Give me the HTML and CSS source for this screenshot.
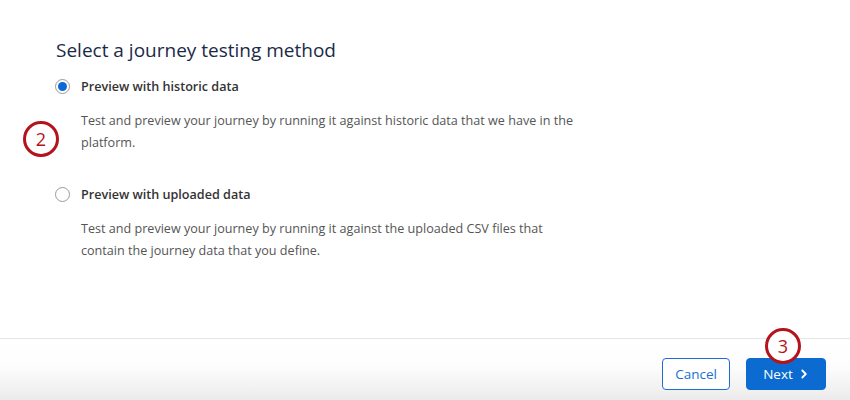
FILE: index.html
```html
<!DOCTYPE html>
<html>
<head>
<meta charset="utf-8">
<link rel="stylesheet" href="styles.css">
</head>
<body>
<div class="page">
  <main class="content">
    <h1 class="title">Select a journey testing method</h1>
    <div class="option">
      <label class="option-head">
        <span class="radio checked"></span>
        <span class="option-label">Preview with historic data</span>
      </label>
      <div class="option-body">
        <span class="callout callout-2">2</span>
        <p class="desc">Test and preview your journey by running it against historic data that we have in the platform.</p>
      </div>
    </div>
    <div class="option">
      <label class="option-head">
        <span class="radio"></span>
        <span class="option-label">Preview with uploaded data</span>
      </label>
      <div class="option-body">
        <p class="desc">Test and preview your journey by running it against the uploaded CSV files that contain the journey data that you define.</p>
      </div>
    </div>
  </main>
  <footer class="footer">
    <button class="btn btn-secondary">Cancel</button>
    <button class="btn btn-primary">Next
      <svg class="chev" width="10" height="10" viewBox="0 0 10 10"><path d="M3.3 1.5 L6.8 5 L3.3 8.5" fill="none" stroke="#fff" stroke-width="1.8" stroke-linecap="round" stroke-linejoin="round"/></svg>
      <span class="callout callout-3">3</span>
    </button>
  </footer>
</div>
</body>
</html>
```
FILE: styles.css
```css
* { box-sizing: border-box; }
html, body { margin: 0; padding: 0; }
body {
  width: 850px;
  height: 400px;
  overflow: hidden;
  background: #fff;
  font-family: "Open Sans", "Noto Sans", sans-serif;
}
.page {
  display: flex;
  flex-direction: column;
  height: 400px;
}
.content {
  flex: 1;
  padding: 36px 0 0 55px;
}
.title {
  margin: 0 0 12px 1px;
  font-size: 19px;
  font-weight: 400;
  line-height: 28px;
  color: #1b2a47;
}
.option { margin-bottom: 30px; }
.option-head {
  display: flex;
  align-items: center;
  gap: 11px;
  height: 20px;
}
.radio {
  width: 15px;
  height: 15px;
  border-radius: 50%;
  border: 1px solid #9a9a9a;
  background: #fff;
  display: flex;
  align-items: center;
  justify-content: center;
  flex: none;
}
.radio.checked::after {
  content: "";
  width: 9px;
  height: 9px;
  border-radius: 50%;
  background: #0b6bd3;
}
.option-label {
  font-size: 12.6px;
  font-weight: 600;
  color: #333;
}
.option-body {
  position: relative;
  padding: 14px 0 0 26px;
}
.desc {
  margin: 0;
  width: 500px;
  font-size: 12.6px;
  line-height: 22px;
  color: #555;
}
.callout {
  position: absolute;
  width: 36px;
  height: 36px;
  border-radius: 50%;
  border: 3px solid #b5121b;
  background: #fff;
  color: #b5121b;
  font-family: "Open Sans", sans-serif;
  font-size: 18px;
  font-weight: 400;
  display: flex;
  align-items: center;
  justify-content: center;
}
.callout-2 { left: -32px; top: 25px; }
.callout-3 { left: 18px; top: -31px; }
.footer {
  height: 62px;
  border-top: 1px solid #e6e6e6;
  background: linear-gradient(to bottom, #fff 0%, #fdfdfd 45%, #ebebeb 100%);
  display: flex;
  justify-content: flex-end;
  align-items: flex-start;
  gap: 16px;
  padding: 19px 24px 0 0;
}
.btn {
  height: 32px;
  border-radius: 4px;
  font-family: "Open Sans", sans-serif;
  font-size: 13.5px;
  padding: 0;
  display: flex;
  align-items: center;
  justify-content: center;
}
.btn-secondary {
  width: 68px;
  background: #fff;
  border: 1px solid #1a6fd1;
  color: #1a6fd1;
}
.btn-primary {
  position: relative;
  width: 80px;
  background: #0b6bd0;
  border: 1px solid #0b6bd0;
  color: #fff;
  gap: 6px;
}
.chev { display: block; }
```
